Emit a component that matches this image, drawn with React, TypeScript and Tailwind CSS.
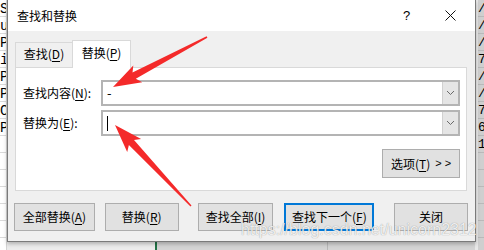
import React from "react";

type Pt = [number, number];

// tapered callout arrow, from tail to tip
function arrowPoints(tail: Pt, tip: Pt, tailW = 1.5, neckW = 7, headLen = 24, headW = 19) {
  const dx = tip[0] - tail[0];
  const dy = tip[1] - tail[1];
  const len = Math.hypot(dx, dy);
  const ux = dx / len;
  const uy = dy / len;
  const nx = -uy;
  const ny = ux;
  const neck: Pt = [tip[0] - ux * headLen, tip[1] - uy * headLen];
  const barb: Pt = [neck[0] - ux * 4, neck[1] - uy * 4];
  const pts: Pt[] = [
    [tail[0] + (nx * tailW) / 2, tail[1] + (ny * tailW) / 2],
    [neck[0] + (nx * neckW) / 2, neck[1] + (ny * neckW) / 2],
    [barb[0] + (nx * headW) / 2, barb[1] + (ny * headW) / 2],
    tip,
    [barb[0] - (nx * headW) / 2, barb[1] - (ny * headW) / 2],
    [neck[0] - (nx * neckW) / 2, neck[1] - (ny * neckW) / 2],
    [tail[0] - (nx * tailW) / 2, tail[1] - (ny * tailW) / 2],
  ];
  return pts.map((p) => p.map((v) => v.toFixed(1)).join(",")).join(" ");
}

function Key({ k }: { k: string }) {
  return <span className="underline underline-offset-2">{k}</span>;
}

function Combo({ children }: { children?: React.ReactNode }) {
  return (
    <div className="flex-1 flex h-[26px] border-2 border-[#b4b4b4] bg-white">
      <div className="flex-1 flex items-center pl-[3px] text-[13px] leading-none">{children}</div>
      <div className="w-[16px] bg-[#e5e5e5] border-l border-[#d0d0d0] flex items-center justify-center">
        <svg width="9" height="6" viewBox="0 0 9 6">
          <path d="M1 1l3.5 3.5L8 1" fill="none" stroke="#6b6b6b" strokeWidth="1" />
        </svg>
      </div>
    </div>
  );
}

function Btn({
  children,
  className = "",
  primary = false,
}: {
  children: React.ReactNode;
  className?: string;
  primary?: boolean;
}) {
  return (
    <button
      className={
        "h-[28px] bg-[#e1e1e1] text-[12px] text-black flex items-center justify-center " +
        (primary ? "border-2 border-[#0078d7] " : "border border-[#adadad] ") +
        className
      }
    >
      {children}
    </button>
  );
}

const leftRows = ["St", "u", "Ph", "i", "Pi", "Ph", "Co", "Pa", "", "", "", "", "", ""];
const rightRows = ["/", "/", "/", "7", "/", "/", "7", "6", "1", "", "", "", "", ""];

export default function App() {
  return (
    <div
      className="relative w-[484px] h-[250px] overflow-hidden bg-white text-black"
      style={{ fontFamily: '"Noto Sans CJK SC", "Noto Sans", sans-serif' }}
    >
      {/* spreadsheet behind the dialog */}
      <div className="absolute inset-0 flex">
        <div className="w-[7px] flex flex-col border-r border-[#d4d4d4] font-['Liberation_Mono',monospace] text-[14px] leading-none overflow-hidden">
          {leftRows.map((t, i) => (
            <div key={i} className="h-[17px] border-b border-[#dadada] pt-[2px] whitespace-nowrap">
              {t}
            </div>
          ))}
        </div>
        <div className="flex-1 flex flex-col justify-end">
          <div className="h-[9px] flex">
            <div className="w-[148px] bg-[#ececec]" />
            <div className="w-[2px] bg-[#217346]" />
            <div className="w-[171px] bg-[#d4d4d4] border-r border-[#b8b8b8]" />
            <div className="flex-1 bg-[#d4d4d4]" />
          </div>
        </div>
        <div className="w-[9px] flex flex-col bg-[#cfcfcf] border-l-[3px] border-[#e8e8e8] font-['Liberation_Mono',monospace] text-[13px] leading-none overflow-hidden">
          {rightRows.map((t, i) => (
            <div key={i} className="h-[17px] border-b border-[#b9b9b9] pt-[2px] whitespace-nowrap">
              {t}
            </div>
          ))}
        </div>
      </div>

      {/* dialog window */}
      <div className="absolute left-[7px] top-0 w-[469px] h-[242px] border-x border-b border-[#7a7a7a] flex flex-col shadow-[0_2px_4px_rgba(0,0,0,0.25)]">
        <div className="h-[31px] bg-white flex items-center pl-[9px] text-[12px]">
          <span className="flex-1">查找和替换</span>
          <span className="w-[44px] text-[13px] font-['Liberation_Sans',sans-serif] pl-[2px]">?</span>
          <span className="w-[30px] flex items-center">
            <svg width="11" height="11" viewBox="0 0 11 11">
              <path d="M0.5 0.5l10 10M10.5 0.5l-10 10" stroke="#111" strokeWidth="1" />
            </svg>
          </span>
        </div>

        <div className="flex-1 bg-[#f0f0f0] flex flex-col pt-[9px] px-[7px]">
          {/* tabs */}
          <div className="flex items-end h-[27px] text-[12px]">
            <div className="w-[57px] h-[25px] border-t border-l border-[#d9d9d9] bg-[#f0f0f0] flex items-center justify-center pb-[2px]">
              查找(<Key k="D" />)
            </div>
            <div className="relative z-10 w-[59px] h-[28px] -mb-px border-x border-t border-[#d9d9d9] bg-white flex items-center justify-center pb-[3px]">
              替换(<Key k="P" />)
            </div>
          </div>

          {/* tab panel */}
          <div className="w-[452px] h-[124px] bg-white border border-[#d9d9d9] flex flex-col pt-[12px] pl-[7px] pr-[6px] text-[12px]">
            <div className="flex items-center gap-0">
              <span className="w-[78px]">
                查找内容(<Key k="N" />):
              </span>
              <Combo>
                <span className="pl-[1px] -mt-[1px]">-</span>
              </Combo>
            </div>
            <div className="flex items-center mt-[4px]">
              <span className="w-[78px]">
                替换为(<Key k="E" />):
              </span>
              <Combo>
                <span className="w-px h-[15px] bg-black ml-[1px]" />
              </Combo>
            </div>
            <div className="flex justify-end mt-[13px]">
              <Btn className="w-[78px] h-[29px]">
                选项(<Key k="T" />)<span className="ml-[5px] font-['Liberation_Sans',sans-serif] text-[11px]">&gt; &gt;</span>
              </Btn>
            </div>
          </div>

          {/* bottom buttons */}
          <div className="flex mt-[12px]">
            <Btn className="w-[81px] ml-[-1px]">
              全部替换(<Key k="A" />)
            </Btn>
            <Btn className="w-[74px] ml-[10px]">
              替换(<Key k="R" />)
            </Btn>
            <Btn className="w-[76px] ml-[19px]">
              查找全部(<Key k="I" />)
            </Btn>
            <Btn primary className="w-[90px] ml-[11px]">
              查找下一个(<Key k="F" />)
            </Btn>
            <Btn className="w-[74px] ml-[20px]">关闭</Btn>
          </div>
        </div>
      </div>

      {/* red annotation arrows */}
      <svg className="absolute inset-0 pointer-events-none" width="484" height="250">
        <polygon points={arrowPoints([207, 37], [113, 87])} fill="#f42a2a" />
        <polygon points={arrowPoints([191, 206], [115, 125])} fill="#f42a2a" />
      </svg>

      {/* watermark */}
      <div className="absolute left-[241px] top-[222px] text-[16px] leading-none text-white/85 font-['Liberation_Sans',sans-serif] [text-shadow:0_0_1px_rgba(0,0,0,0.45)] whitespace-nowrap pointer-events-none">
        https://blog.csdn.net/unicorn2312
      </div>
    </div>
  );
}
